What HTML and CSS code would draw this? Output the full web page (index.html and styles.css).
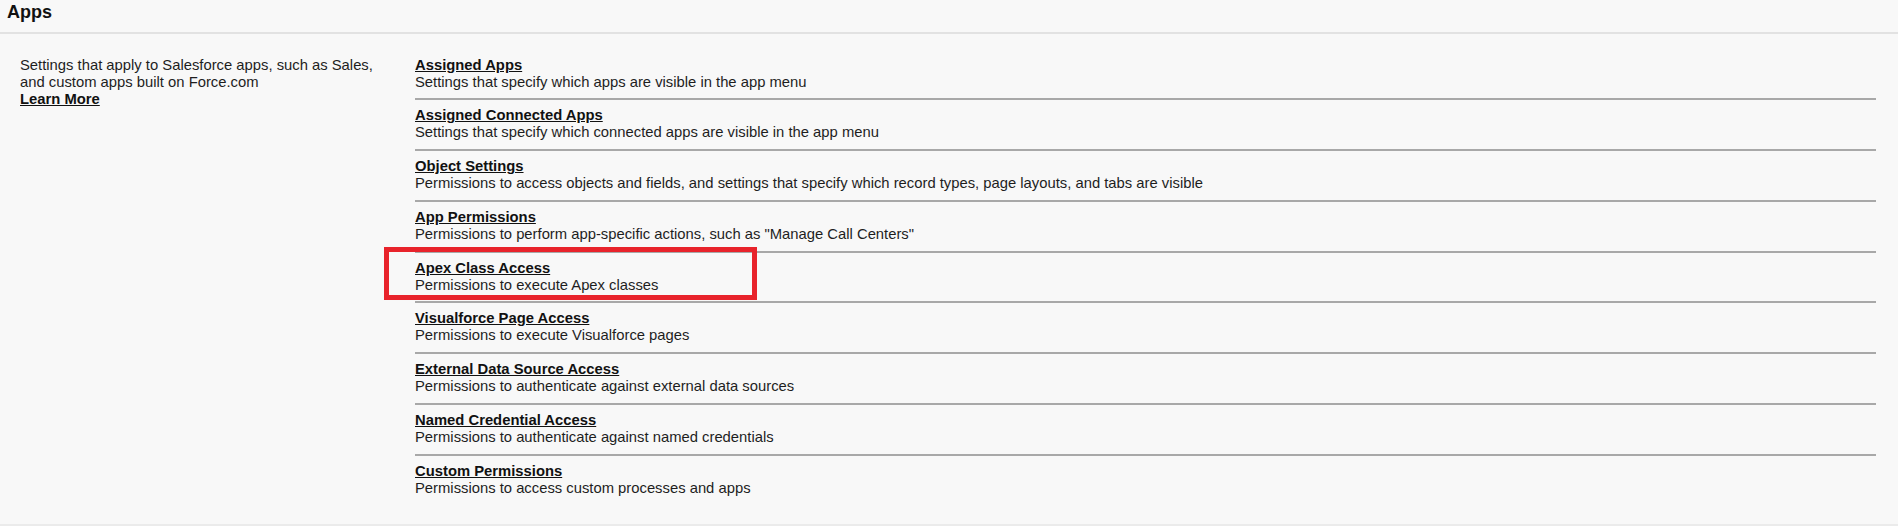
FILE: index.html
```html
<!DOCTYPE html>
<html>
<head>
<meta charset="utf-8">
<link rel="stylesheet" href="styles.css">
</head>
<body>
<div class="page">
  <div class="header"><h2 class="header-title">Apps</h2></div>
  <div class="section">
    <div class="intro">
      <div>Settings that apply to Salesforce apps, such as Sales,<br>and custom apps built on Force.com</div>
      <a class="link" href="#">Learn More</a>
    </div>
    <ul class="items">
      <li class="item"><a class="link" href="#">Assigned Apps</a><div>Settings that specify which apps are visible in the app menu</div></li>
      <li class="item"><a class="link" href="#">Assigned Connected Apps</a><div>Settings that specify which connected apps are visible in the app menu</div></li>
      <li class="item"><a class="link" href="#">Object Settings</a><div>Permissions to access objects and fields, and settings that specify which record types, page layouts, and tabs are visible</div></li>
      <li class="item"><a class="link" href="#">App Permissions</a><div>Permissions to perform app-specific actions, such as "Manage Call Centers"</div></li>
      <li class="item item-marked"><a class="link" href="#">Apex Class Access</a><div>Permissions to execute Apex classes</div><span class="marker"></span></li>
      <li class="item"><a class="link" href="#">Visualforce Page Access</a><div>Permissions to execute Visualforce pages</div></li>
      <li class="item"><a class="link" href="#">External Data Source Access</a><div>Permissions to authenticate against external data sources</div></li>
      <li class="item"><a class="link" href="#">Named Credential Access</a><div>Permissions to authenticate against named credentials</div></li>
      <li class="item"><a class="link" href="#">Custom Permissions</a><div>Permissions to access custom processes and apps</div></li>
    </ul>
  </div>
</div>
</body>
</html>
```
FILE: styles.css
```css
html, body {
  margin: 0;
  padding: 0;
  background: #f8f8f8;
}
body {
  font-family: "Liberation Sans", Arial, sans-serif;
  font-size: 14.8px;
  line-height: 17px;
  color: #1e1e1e;
}
.header {
  height: 32px;
  padding: 0 7px;
  border-bottom: 2px solid #e2e2e2;
}
.header-title {
  margin: 0;
  font-size: 18px;
  line-height: 24px;
  font-weight: bold;
  color: #111;
}
.section {
  display: flex;
  padding: 22.5px 22px 27.5px 20px;
  border-bottom: 2px solid #ebebeb;
}
.intro {
  width: 395px;
  flex: none;
}
.link {
  color: #111;
  font-weight: bold;
  text-decoration: underline;
  display: inline-block;
}
.items {
  list-style: none;
  margin: 0;
  padding: 0;
  flex: 1;
}
.item {
  position: relative;
  padding: 7px 0 7.8px;
  border-bottom: 2px solid #a8a8a8;
}
.item:first-child {
  padding-top: 0;
}
.item:last-child {
  border-bottom: none;
  padding-bottom: 0;
}
.marker {
  position: absolute;
  left: -31px;
  top: -6px;
  width: 363px;
  height: 43.3px;
  border: 5px solid #e8232b;
}
```
